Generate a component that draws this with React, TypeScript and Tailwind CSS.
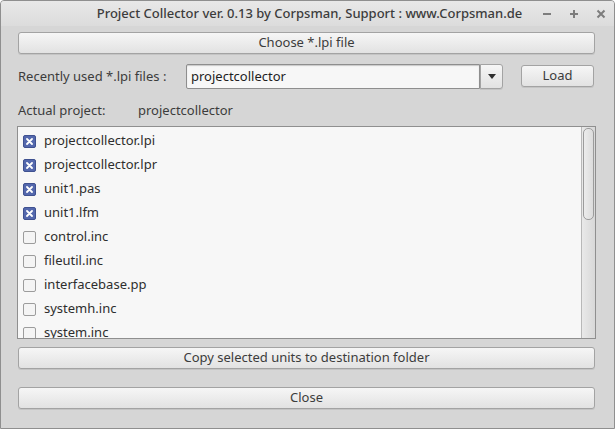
const files = [
    { name: "projectcollector.lpi", checked: true },
    { name: "projectcollector.lpr", checked: true },
    { name: "unit1.pas", checked: true },
    { name: "unit1.lfm", checked: true },
    { name: "control.inc", checked: false },
    { name: "fileutil.inc", checked: false },
    { name: "interfacebase.pp", checked: false },
    { name: "systemh.inc", checked: false },
    { name: "system.inc", checked: false },
];

const btn =
    "flex items-center justify-center rounded-[3px] border border-[#a3a3a3] bg-gradient-to-b from-[#f6f6f6] to-[#e2e2e2] shadow-[0_1px_0_#c4c4c4] text-[13px] text-[#3c3c3c]";

const CheckBox = ({ checked }: { checked: boolean }) =>
    checked ? (
        <div className="w-[13px] h-[13px] rounded-[2px] border border-[#3f5190] bg-[#5468ad] flex items-center justify-center">
            <svg width="7" height="7" viewBox="0 0 7 7">
                <path d="M1 1L6 6M6 1L1 6" stroke="#ffffff" strokeWidth="1.8" strokeLinecap="round" />
            </svg>
        </div>
    ) : (
        <div className="w-[13px] h-[13px] rounded-[2px] border border-[#9c9c9c] bg-[#f4f4f4]" />
    );

const App = () => {
    return (
        <div
            className="w-[615px] h-[429px] flex flex-col bg-[#d6d6d6] border border-[#8f8f8f] rounded-t-[4px] overflow-hidden text-[#3c3c3c]"
            style={{ fontFamily: '"Noto Sans", "Open Sans", sans-serif' }}
        >
            <div className="h-[25px] relative flex items-center justify-center bg-gradient-to-b from-[#e8e8e8] to-[#dcdcdc] shrink-0">
                <span className="text-[13px] font-medium text-[#3c3c3c] pl-[4px]">
                    Project Collector ver. 0.13 by Corpsman, Support : www.Corpsman.de
                </span>
                <div className="absolute right-[8px] top-0 h-[25px] flex items-center gap-[17px] text-[#7d7d7d]">
                    <svg width="10" height="10" viewBox="0 0 10 10">
                        <path d="M1 5H9" stroke="currentColor" strokeWidth="2" />
                    </svg>
                    <svg width="10" height="10" viewBox="0 0 10 10">
                        <path d="M1 5H9M5 1V9" stroke="currentColor" strokeWidth="2" />
                    </svg>
                    <svg width="10" height="10" viewBox="0 0 10 10">
                        <path d="M1.5 1.5L8.5 8.5M8.5 1.5L1.5 8.5" stroke="currentColor" strokeWidth="2" />
                    </svg>
                </div>
            </div>

            <div className={`${btn} ml-[17px] w-[577px] h-[22px] mt-[6px] shrink-0`}>Choose *.lpi file</div>

            <div className="ml-[17px] w-[577px] h-[25px] mt-[10px] flex items-center shrink-0">
                <span className="text-[13px] w-[168px]">Recently used *.lpi files :</span>
                <div className="w-[294px] h-[25px] border border-[#8e8e8e] bg-[#f7f7f7] rounded-l-[2px] flex items-center pl-[4px] text-[13px] text-[#1e1e1e] shadow-[inset_0_1px_1px_#c8c8c8]">
                    projectcollector
                </div>
                <div className={`${btn} w-[23px] h-[25px] !rounded-l-none`}>
                    <svg width="8" height="5" viewBox="0 0 8 5">
                        <path d="M0 0H8L4 5Z" fill="#2e2e2e" />
                    </svg>
                </div>
                <div className={`${btn} ml-[18px] w-[73px] h-[22px] mb-[2px]`}>Load</div>
            </div>

            <div className="ml-[17px] h-[24px] mt-[10px] flex items-center text-[13px] shrink-0">
                <span className="w-[120px]">Actual project:</span>
                <span>projectcollector</span>
            </div>

            <div className="ml-[16px] w-[579px] h-[213px] mt-[3px] border border-[#8f8f8f] bg-[#f7f7f7] flex shrink-0 overflow-hidden">
                <div className="flex-1 pt-[2px] overflow-hidden">
                    {files.map((f) => (
                        <div key={f.name} className="h-[24px] flex items-center pl-[5px] gap-[8px] text-[13px] text-[#2e2e2e]">
                            <CheckBox checked={f.checked} />
                            <span>{f.name}</span>
                        </div>
                    ))}
                </div>
                <div className="w-[14px] h-full border-l border-[#b8b8b8] bg-gradient-to-r from-[#e9e9e9] to-[#d8d8d8] pt-[1px] px-[1px]">
                    <div className="h-[92px] rounded-[5px] border border-[#9c9c9c] bg-gradient-to-r from-[#ececec] to-[#dcdcdc]" />
                </div>
            </div>

            <div className={`${btn} ml-[17px] w-[577px] h-[22px] mt-[8px] shrink-0`}>Copy selected units to destination folder</div>
            <div className={`${btn} ml-[17px] w-[577px] h-[22px] mt-[18px] shrink-0`}>Close</div>
        </div>
    );
};

export default App;
